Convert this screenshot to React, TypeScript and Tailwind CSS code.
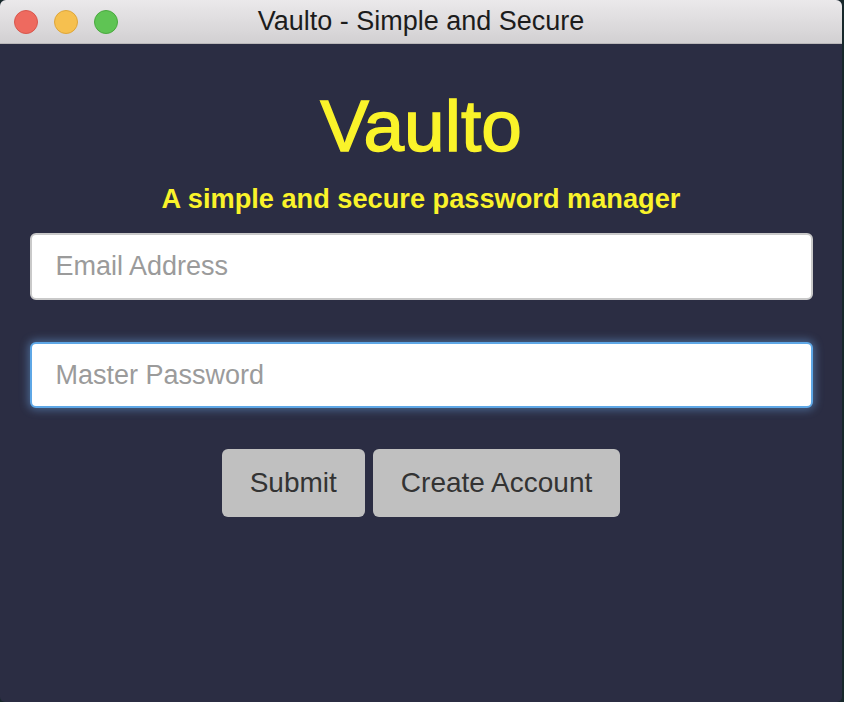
export default function App() {
  const font = { fontFamily: '"Liberation Sans", Arial, sans-serif' }
  return (
    <div className="w-[844px] h-[702px] bg-[#17282b] flex" style={font}>
      <div className="w-[842px] h-full flex flex-col rounded-t-[6px] rounded-b-[5px] overflow-hidden bg-[#2b2d43]">
        {/* title bar */}
        <div className="relative h-[44px] shrink-0 bg-gradient-to-b from-[#ebe9eb] to-[#d2d0d2] border-b border-[#b9b7b9] flex items-center justify-center">
          <div className="absolute left-[14px] top-[10px] flex gap-[16px]">
            <span className="w-[24px] h-[24px] rounded-full bg-[#ee6a5f] border border-[#d8574d]" />
            <span className="w-[24px] h-[24px] rounded-full bg-[#f6c04f] border border-[#dea63a]" />
            <span className="w-[24px] h-[24px] rounded-full bg-[#5fc454] border border-[#4aa93f]" />
          </div>
          <span className="text-[27px] text-[#1c1c1c] leading-none">Vaulto - Simple and Secure</span>
        </div>

        <div className="flex flex-col items-center pt-[45px]">
          <h1 className="text-[73px] leading-none text-[#faf32a] [-webkit-text-stroke:1.4px_#faf32a]">Vaulto</h1>
          <p className="mt-[23px] text-[27.2px] leading-none font-bold text-[#faf32a]">
            A simple and secure password manager
          </p>

          <form className="w-[783px] mt-[21px] flex flex-col">
            <input
              type="email"
              placeholder="Email Address"
              className="h-[67px] w-full rounded-[6px] border-2 border-[#c9c9c9] bg-white px-[24px] text-[27px] text-[#333] placeholder-[#9b9b9b] outline-none"
            />
            <input
              type="password"
              placeholder="Master Password"
              className="mt-[42px] h-[66px] w-full rounded-[6px] border-2 border-[#5ea7e6] bg-white px-[24px] text-[27px] text-[#333] placeholder-[#9b9b9b] outline-none shadow-[0_0_9px_2px_rgba(110,170,235,0.45)]"
            />
            <div className="mt-[41px] flex justify-center gap-[8px]">
              <button type="submit" className="h-[68px] px-[28px] rounded-[6px] bg-[#c0c0c0] text-[28px] text-[#333]">
                Submit
              </button>
              <button type="button" className="h-[68px] px-[28px] rounded-[6px] bg-[#c0c0c0] text-[28px] text-[#333]">
                Create Account
              </button>
            </div>
          </form>
        </div>
      </div>
    </div>
  )
}
